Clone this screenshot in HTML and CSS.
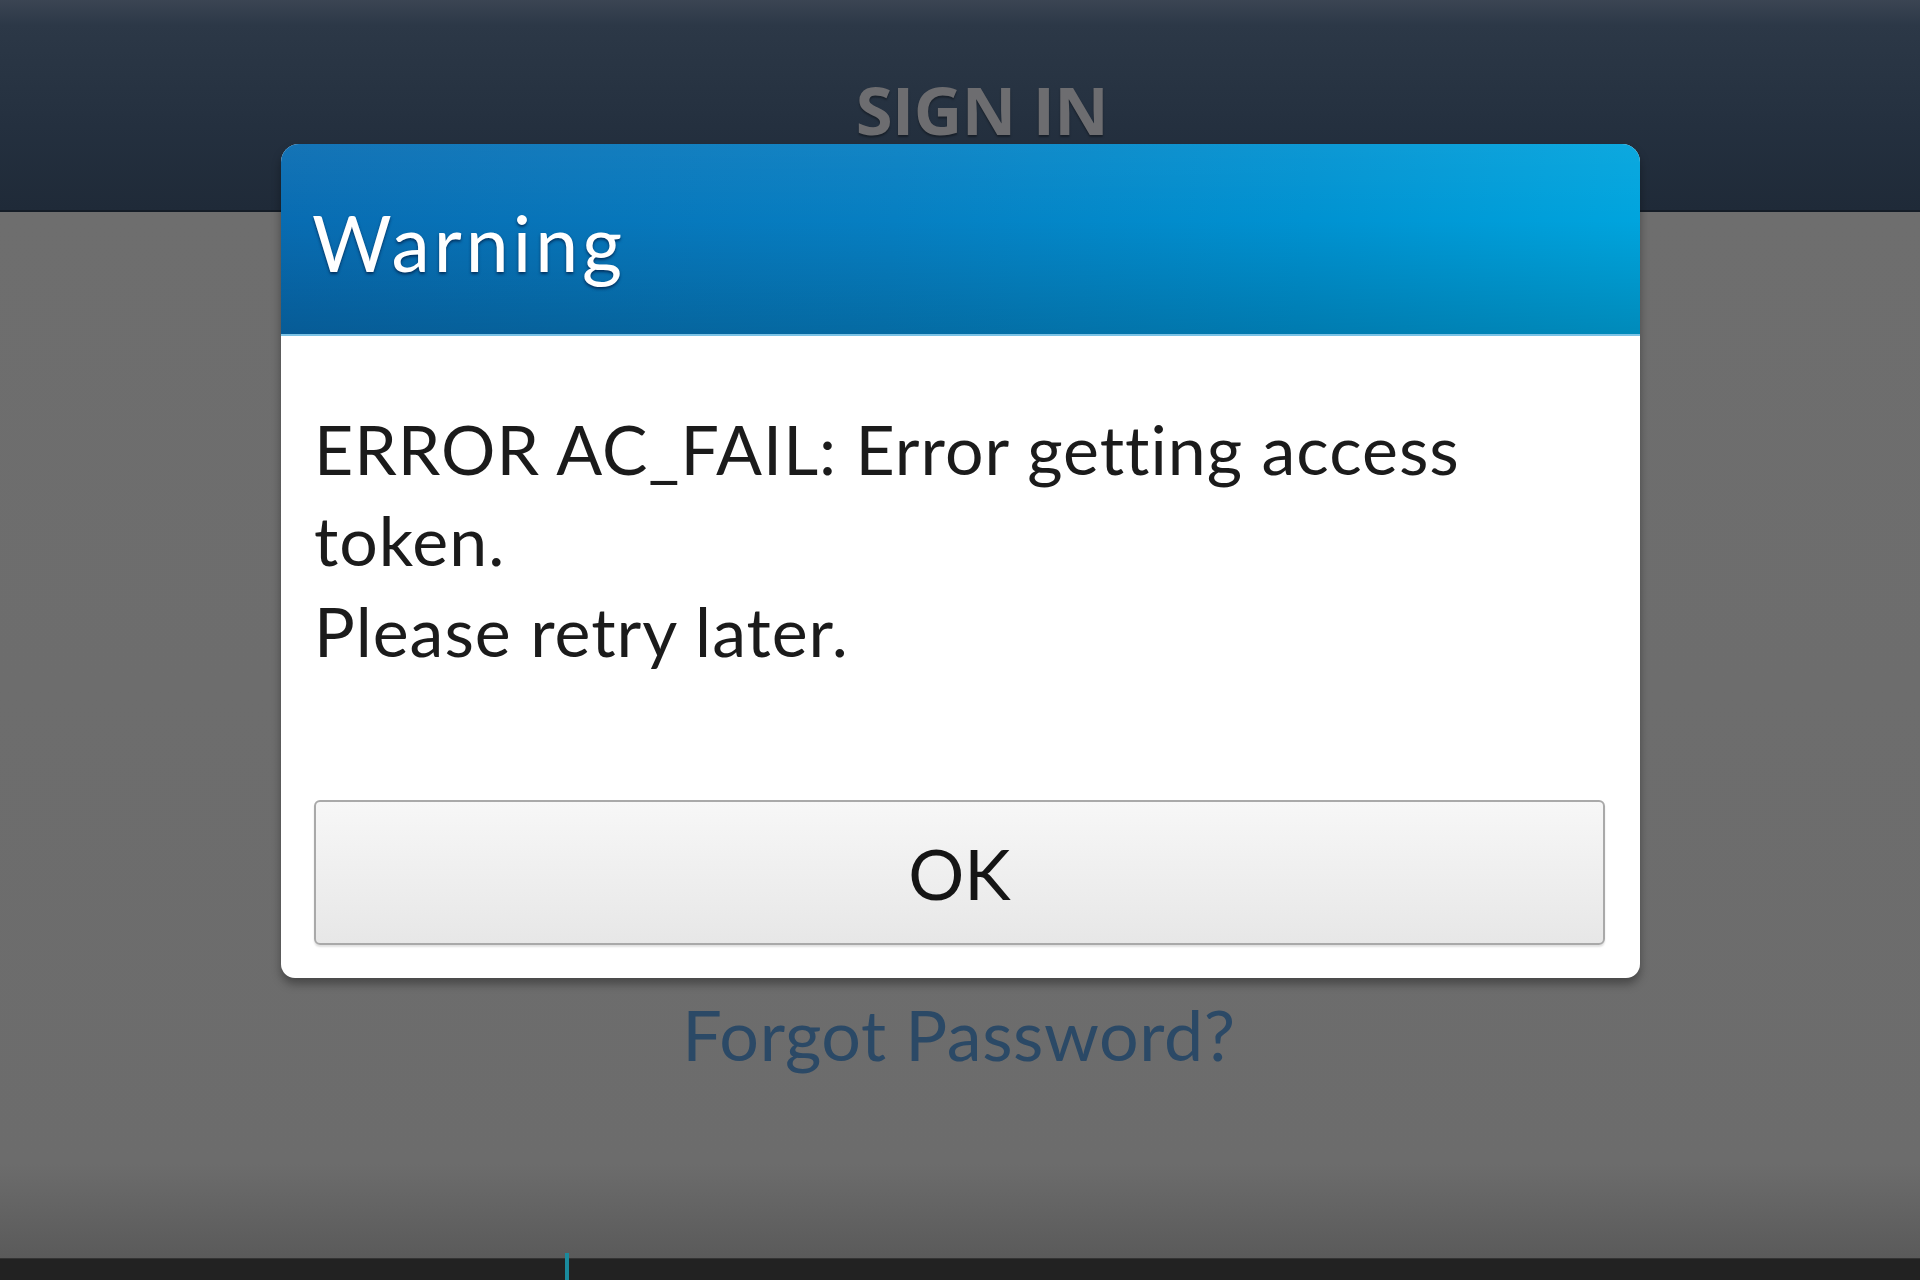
FILE: index.html
```html
<!DOCTYPE html>
<html>
<head>
<meta charset="utf-8">
<link rel="stylesheet" href="styles.css">
</head>
<body>
<div class="screen">
  <header class="topbar">
    <h1 class="topbar-title">SIGN IN</h1>
  </header>
  <main class="content">
    <a class="forgot" href="#">Forgot Password?</a>
  </main>
  <footer class="bottombar">
    <span class="indicator"></span>
  </footer>

  <div class="dialog" role="alertdialog">
    <div class="dialog-head">
      <h2 class="dialog-title">Warning</h2>
    </div>
    <div class="dialog-body">
      <p class="dialog-msg">ERROR AC_FAIL: Error getting access token.<br>Please retry later.</p>
      <button class="dialog-btn" type="button">OK</button>
    </div>
  </div>
</div>
</body>
</html>
```
FILE: styles.css
```css
html, body {
  margin: 0;
  padding: 0;
}
body {
  width: 1920px;
  height: 1280px;
  overflow: hidden;
  background: #6e6e6e;
  font-family: "Lato", "Open Sans", sans-serif;
  font-variant-ligatures: none;
}
.screen {
  position: relative;
  width: 1920px;
  height: 1280px;
  display: flex;
  flex-direction: column;
}
.topbar {
  height: 210px;
  flex: 0 0 auto;
  background: linear-gradient(180deg, #3b4553 0%, #2c3847 12%, #24303f 60%, #1f2a38 100%);
  border-bottom: 2px solid #151d27;
  display: flex;
  justify-content: center;
}
.topbar-title {
  margin: 70px 0 0 44px;
  font-family: "Open Sans", "Lato", sans-serif;
  font-weight: 700;
  font-size: 67px;
  line-height: 78px;
  letter-spacing: -0.5px;
  color: #6d6d70;
  text-shadow: 0 2px 2px rgba(0,0,0,0.35);
}
.content {
  flex: 1 1 auto;
  display: flex;
  flex-direction: column;
  align-items: center;
  background: linear-gradient(180deg, #6e6e6e 0%, #6c6c6c 91%, #5a5a5a 100%);
}
.forgot {
  margin-top: 780px;
  margin-left: -2px;
  font-size: 70px;
  line-height: 84px;
  letter-spacing: 0.6px;
  color: #2b4966;
  text-decoration: none;
}
.bottombar {
  height: 21px;
  flex: 0 0 auto;
  background: #222222;
  border-top: 1px solid #333;
  position: relative;
}
.indicator {
  position: absolute;
  left: 565px;
  top: -6px;
  width: 4px;
  height: 27px;
  background: #1a8a9c;
}
.dialog {
  position: absolute;
  left: 281px;
  top: 144px;
  width: 1359px;
  height: 834px;
  display: flex;
  flex-direction: column;
  background: #ffffff;
  border-radius: 18px 18px 14px 14px;
  box-shadow: 0 6px 10px rgba(0,0,0,0.35);
  overflow: hidden;
}
.dialog-head {
  height: 192px;
  flex: 0 0 auto;
  display: flex;
  align-items: center;
  padding: 6px 0 0 31px;
  box-sizing: border-box;
  background:
    linear-gradient(180deg, rgba(255,255,255,0.05) 0%, rgba(0,0,0,0) 40%, rgba(0,0,0,0.16) 100%),
    linear-gradient(95deg, #086cb2 0%, #067fc2 45%, #0092d1 75%, #00a5de 100%);
  border-bottom: 2px solid #7cc3e6;
}
.dialog-title {
  margin: 0;
  font-weight: 400;
  font-size: 77px;
  line-height: 90px;
  letter-spacing: 4px;
  color: #ffffff;
  text-shadow: 0 2px 3px rgba(0,30,70,0.75);
}
.dialog-body {
  flex: 1 1 auto;
  display: flex;
  flex-direction: column;
  padding: 67px 35px 33px 33px;
}
.dialog-msg {
  margin: 0;
  font-size: 68px;
  line-height: 91px;
  letter-spacing: 1px;
  color: #1b1b1b;
  flex: 1 1 auto;
}
.dialog-btn {
  height: 145px;
  flex: 0 0 auto;
  width: 100%;
  border: 2px solid #a9a9a9;
  border-radius: 6px;
  background: linear-gradient(180deg, #f7f7f7 0%, #efefef 50%, #e7e7e7 100%);
  box-shadow: 0 2px 2px rgba(0,0,0,0.12);
  font-family: "Lato", "Open Sans", sans-serif;
  font-size: 70px;
  color: #151515;
  padding: 0;
}
```
